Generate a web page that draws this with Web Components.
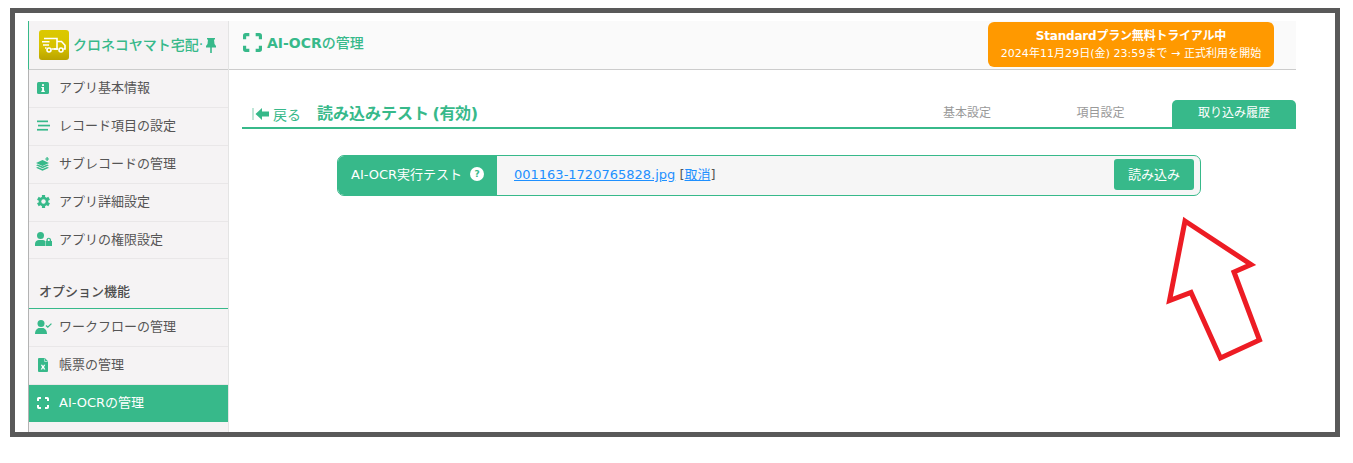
<!DOCTYPE html>
<html lang="ja">
<head>
<meta charset="utf-8">
<title>AI-OCRの管理</title>
<style>
  html, body { margin: 0; padding: 0; background: #fff; }
  body { font: 13px "DejaVu Sans", "Noto Sans CJK JP", sans-serif; color: #555; }
</style>
</head>
<body>
<shot-frame>
  <app-sidebar></app-sidebar>
  <app-header></app-header>
  <test-page></test-page>
</shot-frame>

<script>
const GREEN = '#37b98a';
const SIDE_BG = '#f5f3f4';

const ICONS = {
  info: `<svg width="12" height="12" viewBox="0 0 12 12"><rect width="12" height="12" rx="1.500" fill="${GREEN}"/><rect x="5" y="2.200" width="2" height="1.700" fill="#fff"/><path d="M4.300 5h2.700v3.800h.8V10H4.300V8.800h.8V6.100h-.8z" fill="#fff"/></svg>`,
  list: `<svg width="13" height="11" viewBox="0 0 13 11" fill="${GREEN}"><rect y=".5" width="11" height="1.700"/><rect x="1" y="4.700" width="12" height="1.700"/><rect y="8.900" width="11" height="1.700"/></svg>`,
  layers: `<svg width="14" height="14" viewBox="0 0 14 14" fill="${GREEN}"><path d="M6.500 3 13 6 6.500 9 0 6z"/><path d="M0 8.200 1.800 7.400 6.500 9.600l4.700-2.200 1.800.8-6.500 3z"/><path d="M0 10.700 1.800 9.900 6.500 12.100l4.700-2.200 1.800.8L6.500 13.800z"/><path d="M10.500 0h1.200v1.400H13v1.200h-1.300V4h-1.200V2.600H9.200V1.400h1.300z"/></svg>`,
  gear: `<svg width="13" height="13" viewBox="-6.500 -6.500 13 13"><g fill="${GREEN}"><circle r="4.800"/><rect x="-1.600" y="-6.500" width="3.200" height="13"/><rect x="-1.600" y="-6.500" width="3.200" height="13" transform="rotate(60)"/><rect x="-1.600" y="-6.500" width="3.200" height="13" transform="rotate(120)"/></g><circle r="2.200" fill="${SIDE_BG}"/></svg>`,
  userLock: `<svg width="17" height="14" viewBox="0 0 17 14" fill="${GREEN}"><circle cx="5.500" cy="3.500" r="3.500"/><path d="M0 14V12C0 9.500 2 8 4 8h3c1.500 0 2.500.4 3 1v5z"/><path fill-rule="evenodd" d="M10.500 9h.9V7.700a2.400 2.400 0 0 1 4.700 0V9h.9v5h-6.500zM12.800 9h1.900V7.700a.95.95 0 0 0-1.900 0z"/></svg>`,
  userCheck: `<svg width="17" height="14" viewBox="0 0 17 14" fill="${GREEN}"><circle cx="6" cy="3.500" r="3.500"/><path d="M0 14c0-3.500 2-6 4.500-6h3c2.500 0 4.500 2.500 4.500 6z"/><path d="M10.500 6l1-1 1.300 1.300L16 3.200l.9.900-4.100 4z"/></svg>`,
  excel: `<svg width="10" height="14" viewBox="0 0 10 14"><path d="M1 0h5.800L10 3.200V13a1 1 0 0 1-1 1H1a1 1 0 0 1-1-1V1a1 1 0 0 1 1-1z" fill="${GREEN}"/><path d="M6.600 .5v3h3" fill="none" stroke="#dff3ec" stroke-width=".7"/><path d="M2.800 6.800h1.500l.8 1.400.8-1.400h1.400L6 9.100l1.400 2.400H5.900L5 10l-.9 1.500H2.700l1.400-2.400z" fill="#fff"/></svg>`,
  frame: (c, s) => `<svg width="${s}" height="${s}" viewBox="0 0 12 12" fill="none" stroke="${c}" stroke-width="2"><path d="M1 4V1.700Q1 1 1.700 1H4M8 1h2.300q.7 0 .7.7V4M11 8v2.300q0 .7-.7.7H8M4 11H1.700Q1 11 1 10.300V8"/></svg>`
};

class ShotFrame extends HTMLElement {
  constructor() {
    super();
    this.attachShadow({ mode: 'open' });
    this.shadowRoot.innerHTML = `
      <style>
        :host { display: block; box-sizing: border-box; width: 1330px; height: 429px; margin: 8px 0 0 10px; border: 5px solid #595959; background: #fff; position: relative; overflow: hidden; }
        .app { display: grid; grid-template-columns: 201px 1067px; grid-template-rows: 49px 1fr; height: 411px; margin: 8px 0 0 13px; }
        ::slotted(app-sidebar) { grid-row: 1 / 3; }
      </style>
      <div class="app"><slot></slot></div>
    `;
  }
}

class AppSidebar extends HTMLElement {
  constructor() {
    super();
    this.attachShadow({ mode: 'open' });
  }
  connectedCallback() {
    const items = [
      ['info', 'アプリ基本情報'],
      ['list', 'レコード項目の設定'],
      ['layers', 'サブレコードの管理'],
      ['gear', 'アプリ詳細設定']
    ];
    const options = [
      ['userCheck', 'ワークフローの管理'],
      ['excel', '帳票の管理']
    ];
    const row = ([icon, label]) => `<side-item><span slot="icon">${ICONS[icon]}</span>${label}</side-item>`;
    this.shadowRoot.innerHTML = `
      <style>
        :host { display: block; box-sizing: border-box; background: ${SIDE_BG}; border-left: 1px solid #b3b3b3; border-right: 1px solid #e4e4e4; }
        .brand { display: flex; align-items: center; gap: 4px; height: 48px; padding-left: 10px; border-bottom: 1px solid #ccc; margin-left: -1px; border-left: 1px solid ${GREEN}; color: ${GREEN}; font-weight: 500; font-size: 14px; white-space: nowrap; }
        .logo { flex: none; width: 30px; height: 30px; border-radius: 3px; background: linear-gradient(#dcc900 0%, #d7c200 55%, #b9a300 100%); display: flex; align-items: center; justify-content: center; }
        .name { display: flex; align-items: center; margin-bottom: 3px; }
        .pin { margin-left: 3px; margin-top: 3px; }
        h2 { margin: 0; padding: 24px 0 8px 10px; font-size: 13px; line-height: 17px; font-weight: 500; color: #4d4d4d; border-bottom: 1px solid ${GREEN}; }
      </style>
      <div class="brand">
        <div class="logo">
          <svg width="24" height="16" viewBox="0 0 24 16" fill="none" stroke="#fff" stroke-width="1.600"><path d="M2 1.500h13v10.500H9.500"/><path d="M15 4.500h4.500l3.500 3.700V12h-1.500"/><path d="M12 12h4"/><circle cx="7" cy="13" r="2"/><circle cx="19" cy="13" r="2"/><path d="M0 4.800h7.500M1 8h6M3 11h1.500"/></svg>
        </div>
        <div class="name">クロネコヤマト宅配<span>·</span><svg class="pin" width="10" height="15" viewBox="0 0 10 15" fill="${GREEN}"><path d="M1 0h8v1.500H8l.5 4.500L10 8v1.500H5.800V15H4.200V9.500H0V8l1.500-2L2 1.500H1z"/></svg></div>
      </div>
      ${items.map(row).join('')}
      <side-item short><span slot="icon">${ICONS.userLock}</span>アプリの権限設定</side-item>
      <h2>オプション機能</h2>
      ${options.map(row).join('')}
      <side-item active><span slot="icon">${ICONS.frame('#fff', 12)}</span>AI-OCRの管理</side-item>
    `;
  }
}

class SideItem extends HTMLElement {
  constructor() {
    super();
    this.attachShadow({ mode: 'open' });
    this.shadowRoot.innerHTML = `
      <style>
        :host { display: flex; align-items: center; box-sizing: border-box; height: 38px; padding-left: 5px; border-bottom: 1px solid #e9e7e8; color: #555; font-size: 13px; white-space: nowrap; }
        :host([short]) { height: 37px; }
        :host([active]) { background: ${GREEN}; color: #fff; border-bottom: 1px solid ${SIDE_BG}; }
        .icon { flex: none; width: 18px; margin: 0 7px 2px 0; display: flex; justify-content: center; align-items: center; }
        ::slotted(span) { display: flex; }
        .text { margin-bottom: 4px; }
      </style>
      <span class="icon"><slot name="icon"></slot></span>
      <span class="text"><slot></slot></span>
    `;
  }
}

class AppHeader extends HTMLElement {
  constructor() {
    super();
    this.attachShadow({ mode: 'open' });
    this.shadowRoot.innerHTML = `
      <style>
        :host { display: flex; align-items: center; box-sizing: border-box; height: 49px; background: #fafafa; border-bottom: 1px solid #ccc; padding-left: 14px; color: ${GREEN}; font-size: 14px; font-weight: 500; white-space: nowrap; }
        .title { display: flex; align-items: center; gap: 5px; flex: 1; margin-bottom: 6px; }
        .title b { font-weight: 700; }
        .trial { width: 286px; height: 45px; margin: 1px 22px 0 0; align-self: flex-start; background: #ff9900; border-radius: 6px; color: #fff; text-align: center; font-size: 11px; font-weight: 400; box-sizing: border-box; padding-top: 6px; }
        .trial b { display: block; font-size: 12px; line-height: 17px; font-weight: 700; letter-spacing: -.2px; }
        .trial span { display: block; line-height: 17px; letter-spacing: .05px; }
      </style>
      <div class="title">${ICONS.frame(GREEN, 19)}<span><b>AI-OCR</b>の管理</span></div>
      <div class="trial"><b>Standardプラン無料トライアル中</b><span>2024年11月29日(金) 23:59まで → 正式利用を開始</span></div>
    `;
  }
}

class TestPage extends HTMLElement {
  constructor() {
    super();
    this.attachShadow({ mode: 'open' });
    this.shadowRoot.innerHTML = `
      <style>
        :host { display: block; padding: 30px 0 0 13px; }
        .bar { display: flex; align-items: flex-end; height: 27px; border-bottom: 2px solid ${GREEN}; }
        .back { display: flex; align-items: center; gap: 4px; height: 25px; margin: 0 16px 1px 10px; color: ${GREEN}; font-size: 14px; }
        h1 { margin: 0 0 1px; flex: 1; height: 25px; line-height: 25px; font-size: 16px; font-weight: 700; color: ${GREEN}; white-space: nowrap; word-spacing: -2px; }
        h1 span { letter-spacing: -.4px; }
        .tabs { display: flex; margin-bottom: -2px; }
        .tab { width: 124px; height: 29px; line-height: 27px; text-align: center; font-size: 12px; color: #999; }
        .tab.on { background: ${GREEN}; color: #fff; border-radius: 5px 5px 0 0; }
        .test { display: flex; box-sizing: border-box; width: 864px; height: 41px; margin: 26px 0 0 95px; border: 1px solid ${GREEN}; border-radius: 7px; background: #f6f6f6; overflow: hidden; }
        .label { display: flex; align-items: center; box-sizing: border-box; width: 159px; padding: 0 0 4px 13px; gap: 8px; background: ${GREEN}; color: #fff; font-size: 13px; white-space: nowrap; }
        .help { display: inline-block; width: 14px; height: 14px; line-height: 14px; border-radius: 50%; background: #fff; color: ${GREEN}; font-size: 9px; font-weight: 700; text-align: center; }
        .file { flex: 1; display: flex; align-items: center; padding: 0 0 4px 17px; color: #555; }
        a { color: #1e90ff; text-decoration: underline; }
        button { align-self: flex-start; width: 80px; height: 31px; margin: 3px 6px 0 0; padding: 0 0 3px; border: 0; border-radius: 3px; background: ${GREEN}; color: #fff; font: inherit; font-size: 13px; }
        .arrow { position: absolute; left: 1135px; top: 182px; pointer-events: none; }
      </style>
      <div class="bar">
        <div class="back">
          <svg width="17" height="12" viewBox="0 0 17 12"><rect width="2" height="12" fill="#bfe7d8"/><path d="M3.500 6l6.500-6V3.500h7v5h-7V12z" fill="${GREEN}"/></svg>
          <span>戻る</span>
        </div>
        <h1>読み込みテスト <span>(有効)</span></h1>
        <div class="tabs">
          <div class="tab">基本設定</div>
          <div class="tab" style="width:143px">項目設定</div>
          <div class="tab on">取り込み履歴</div>
        </div>
      </div>
      <div class="test">
        <div class="label">AI-OCR実行テスト<span class="help">?</span></div>
        <div class="file"><span><a href="#">001163-1720765828.jpg</a> [<a href="#">取消</a>]</span></div>
        <button type="button">読み込み</button>
      </div>
      <svg class="arrow" width="125" height="180" viewBox="1150 195 125 180"><polygon points="1185,221 1251,264.500 1234,272 1259.500,340 1220.500,358 1191,292.500 1169.500,300.500" fill="none" stroke="#ed1c24" stroke-width="5"/></svg>
    `;
  }
}

customElements.define('shot-frame', ShotFrame);
customElements.define('side-item', SideItem);
customElements.define('app-sidebar', AppSidebar);
customElements.define('app-header', AppHeader);
customElements.define('test-page', TestPage);
</script>
</body>
</html>
